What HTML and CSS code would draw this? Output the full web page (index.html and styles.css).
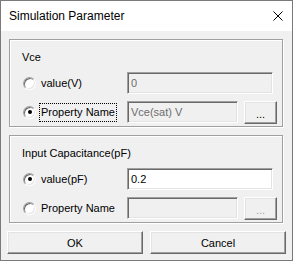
FILE: index.html
```
<!DOCTYPE html>
<html lang="en">
<head>
  <meta charset="UTF-8">
  <title>Simulation Parameter</title>
  <link rel="stylesheet" href="styles.css">
</head>
<body>
  <div class="window">
    <div class="titlebar">
      <span class="title">Simulation Parameter</span>
      <svg class="close" width="10" height="10" viewBox="0 0 10 10">
        <path d="M0.5 0.5 L9.5 9.5 M9.5 0.5 L0.5 9.5" stroke="#000" stroke-width="1" fill="none"/>
      </svg>
    </div>

    <div class="group">
      <div class="group-label">Vce</div>
      <div class="row">
        <div class="option"><span class="radio"></span><span class="option-text">value(V)</span></div>
        <div class="field disabled">0</div>
      </div>
      <div class="row">
        <div class="option"><span class="radio checked"></span><span class="option-text focus">Property Name</span></div>
        <div class="field disabled short">Vce(sat) V</div>
        <div class="btn small">...</div>
      </div>
    </div>

    <div class="group">
      <div class="group-label">Input Capacitance(pF)</div>
      <div class="row">
        <div class="option"><span class="radio checked"></span><span class="option-text">value(pF)</span></div>
        <div class="field">0.2</div>
      </div>
      <div class="row">
        <div class="option"><span class="radio"></span><span class="option-text">Property Name</span></div>
        <div class="field disabled short"></div>
        <div class="btn small disabled">...</div>
      </div>
    </div>

    <div class="actions">
      <div class="btn">OK</div>
      <div class="btn">Cancel</div>
    </div>
  </div>
</body>
</html>
```

FILE: styles.css
```
body {
  margin: 0;
  font-family: "Liberation Sans", Arial, sans-serif;
  font-size: 11px;
  color: #000;
}
.window {
  width: 293px;
  height: 261px;
  box-sizing: border-box;
  border: 1px solid #7a7a7a;
  background-color: #f0f0f0;
}
.titlebar {
  height: 30px;
  background-color: #fff;
  display: flex;
  align-items: center;
  padding-left: 8px;
}
.title {
  font-size: 12px;
  flex: 1;
}
.close {
  margin-right: 9px;
}
.group {
  height: 88px;
  box-sizing: border-box;
  margin: 8px 9px 0 8px;
  border: 1px solid #a0a0a0;
  box-shadow: 1px 1px 0 #fff, inset 1px 1px 0 #fff;
}
.group-label {
  margin: 11px 0 0 12px;
  line-height: 13px;
}
.row {
  display: flex;
  align-items: center;
  height: 22px;
  margin-top: 7px;
  padding-left: 13px;
}
.group-label + .row {
  margin-top: 8px;
}
.option {
  width: 104px;
  display: flex;
  align-items: center;
}
.radio {
  width: 13px;
  height: 13px;
  box-sizing: border-box;
  border-radius: 50%;
  border: 1px solid;
  border-color: #a0a0a0 #fff #fff #a0a0a0;
  box-shadow: inset 1px 1px 0 #696969, inset -1px -1px 0 #e3e3e3;
  background-color: #fff;
  display: flex;
  align-items: center;
  justify-content: center;
}
.radio.checked::after {
  content: "";
  width: 4px;
  height: 4px;
  border-radius: 50%;
  background-color: #000;
}
.option-text {
  margin-left: 3px;
  padding: 2px 1px;
  line-height: 13px;
  border: 1px dotted transparent;
}
.option-text.focus {
  border-color: #000;
}
.field {
  width: 146px;
  height: 22px;
  box-sizing: border-box;
  border: 1px solid;
  border-color: #a0a0a0 #fff #fff #a0a0a0;
  box-shadow: inset 1px 1px 0 #696969, inset -1px -1px 0 #e3e3e3;
  background-color: #fff;
  padding: 0 3px;
  line-height: 20px;
}
.field.disabled {
  background-color: #f0f0f0;
  color: #6d6d6d;
}
.field.short {
  width: 111px;
}
.btn {
  box-sizing: border-box;
  height: 23px;
  border: 1px solid;
  border-color: #fff #696969 #696969 #fff;
  box-shadow: inset -1px -1px 0 #a0a0a0, inset 1px 1px 0 #e3e3e3;
  background-color: #f0f0f0;
  display: flex;
  align-items: center;
  justify-content: center;
}
.btn.small {
  width: 33px;
  margin-left: 6px;
  padding-top: 3px;
}
.btn.disabled {
  color: #a0a0a0;
}
.actions {
  display: flex;
  gap: 7px;
  margin: 8px 0 0 6px;
}
.actions .btn {
  width: 136px;
}
```
